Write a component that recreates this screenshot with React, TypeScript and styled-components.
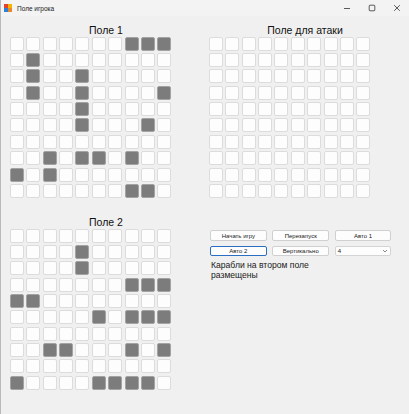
import React from "react";
import styled, { createGlobalStyle } from "styled-components";

const GlobalStyle = createGlobalStyle`
  html, body { margin: 0; padding: 0; background: #f0f0f0; }
  body { font-family: "Liberation Sans", Arial, sans-serif; color: #1a1a1a; }
`;

const Window = styled.div`
  width: 409px;
  height: 414px;
  box-sizing: border-box;
  border-left: 1px solid #b9b9b9;
  background: #f0f0f0;
  overflow: hidden;
`;

const TitleBar = styled.div`
  height: 16px;
  display: flex;
  align-items: center;
  padding-left: 3px;
  background: #f3f3f3;
`;

const TitleText = styled.span`
  font-size: 6.5px;
  margin-left: 5px;
  color: #222;
`;

const WinButtons = styled.div`
  margin-left: auto;
  display: flex;
  align-items: center;
`;

const WinButton = styled.div`
  width: 25px;
  height: 16px;
  display: flex;
  align-items: center;
  justify-content: center;
`;

const Content = styled.div`
  padding: 7px 0 0 9px;
`;

const Row = styled.div<{ $gapTop?: number }>`
  display: flex;
  column-gap: 37px;
  margin-top: ${(p) => p.$gapTop ?? 0}px;
`;

const Column = styled.div`
  width: 162px;
  display: flex;
  flex-direction: column;
`;

const FieldTitle = styled.div`
  height: 13.7px;
  line-height: 14px;
  font-size: 10.5px;
  text-align: center;
  padding-left: 30px;
  white-space: nowrap;
  color: #111;
`;

const Board = styled.div`
  display: grid;
  grid-template-columns: repeat(10, 14px);
  grid-auto-rows: 14px;
  column-gap: 2.37px;
  row-gap: 2.37px;
`;

const Cell = styled.div<{ $ship?: boolean }>`
  box-sizing: border-box;
  border-radius: 2px;
  border: 1px solid ${(p) => (p.$ship ? "#a3a3a3" : "#dcdcdc")};
  background: ${(p) => (p.$ship ? "#7c7c7c" : "#fdfdfd")};
`;

const Controls = styled.div`
  margin: 1.7px 0 0 1px;
  display: flex;
  flex-direction: column;
`;

const ButtonGrid = styled.div`
  display: grid;
  grid-template-columns: repeat(3, 56.7px);
  grid-auto-rows: 10.5px;
  column-gap: 5.7px;
  row-gap: 5.2px;
`;

const Btn = styled.button<{ $focused?: boolean }>`
  box-sizing: border-box;
  margin: 0;
  padding: 0;
  font-family: "Liberation Sans", Arial, sans-serif;
  font-size: 6px;
  color: #1a1a1a;
  background: #fdfdfd;
  border: 1px solid ${(p) => (p.$focused ? "#2b6fc4" : "#d0d0d0")};
  border-radius: 2px;
  line-height: 1;
`;

const Combo = styled.div`
  box-sizing: border-box;
  display: flex;
  align-items: center;
  padding: 0 2px 0 2px;
  font-size: 6px;
  background: #fdfdfd;
  border: 1px solid #d4d4d4;
  border-radius: 2px;
`;

const ComboValue = styled.span`
  flex: 1;
`;

const Status = styled.div`
  margin-top: 5px;
  margin-left: 1px;
  font-size: 8.6px;
  line-height: 9.5px;
  width: 120px;
  color: #1a1a1a;
`;

const parse = (rows: string[]) => rows.map((r) => r.split("").map((c) => c === "#"));

const field1 = parse([
  ".......###",
  ".#........",
  ".#..#.....",
  ".#..#....#",
  "....#.....",
  "....#...#.",
  "..........",
  "..#.##.#..",
  "#.#.......",
  ".......##.",
]);

const field2 = parse([
  "..........",
  "....#.....",
  "....#.....",
  ".......###",
  "##........",
  ".....#.###",
  "..........",
  "..##...#.#",
  "..........",
  "#....####.",
]);

const empty = parse(Array.from({ length: 10 }, () => ".........."));

const GameBoard: React.FC<{ cells: boolean[][] }> = ({ cells }) => (
  <Board>
    {cells.flatMap((row, r) => row.map((ship, c) => <Cell key={`${r}-${c}`} $ship={ship} />))}
  </Board>
);

const AppIcon = () => (
  <svg width="8" height="8" viewBox="0 0 8 8">
    <rect x="0" y="0" width="4" height="4" fill="#e2432f" />
    <rect x="4" y="0" width="4" height="4" fill="#f5b400" />
    <rect x="0" y="4" width="4" height="4" fill="#2f7fd8" />
    <rect x="4" y="4" width="4" height="4" fill="#e98a2a" />
  </svg>
);

export default function App() {
  return (
    <>
      <GlobalStyle />
      <Window>
        <TitleBar>
          <AppIcon />
          <TitleText>Поле игрока</TitleText>
          <WinButtons>
            <WinButton>
              <svg width="8" height="8" viewBox="0 0 8 8">
                <line x1="1" y1="4.5" x2="7" y2="4.5" stroke="#333" strokeWidth="0.8" />
              </svg>
            </WinButton>
            <WinButton>
              <svg width="8" height="8" viewBox="0 0 8 8">
                <rect x="1.2" y="1.2" width="5.6" height="5.6" rx="0.8" fill="none" stroke="#333" strokeWidth="0.8" />
              </svg>
            </WinButton>
            <WinButton>
              <svg width="8" height="8" viewBox="0 0 8 8">
                <path d="M1.2 1.2 L6.8 6.8 M6.8 1.2 L1.2 6.8" stroke="#333" strokeWidth="0.8" />
              </svg>
            </WinButton>
          </WinButtons>
        </TitleBar>
        <Content>
          <Row>
            <Column>
              <FieldTitle>Поле 1</FieldTitle>
              <GameBoard cells={field1} />
            </Column>
            <Column>
              <FieldTitle>Поле для атаки</FieldTitle>
              <GameBoard cells={empty} />
            </Column>
          </Row>
          <Row $gapTop={17}>
            <Column>
              <FieldTitle>Поле 2</FieldTitle>
              <GameBoard cells={field2} />
            </Column>
            <Column>
              <FieldTitle />
              <Controls>
                <ButtonGrid>
                  <Btn>Начать игру</Btn>
                  <Btn>Перезапуск</Btn>
                  <Btn>Авто 1</Btn>
                  <Btn $focused>Авто 2</Btn>
                  <Btn>Вертикально</Btn>
                  <Combo>
                    <ComboValue>4</ComboValue>
                    <svg width="6" height="6" viewBox="0 0 6 6">
                      <path d="M1 2 L3 4 L5 2" fill="none" stroke="#555" strokeWidth="0.7" />
                    </svg>
                  </Combo>
                </ButtonGrid>
                <Status>Карабли на втором поле размещены</Status>
              </Controls>
            </Column>
          </Row>
        </Content>
      </Window>
    </>
  );
}
